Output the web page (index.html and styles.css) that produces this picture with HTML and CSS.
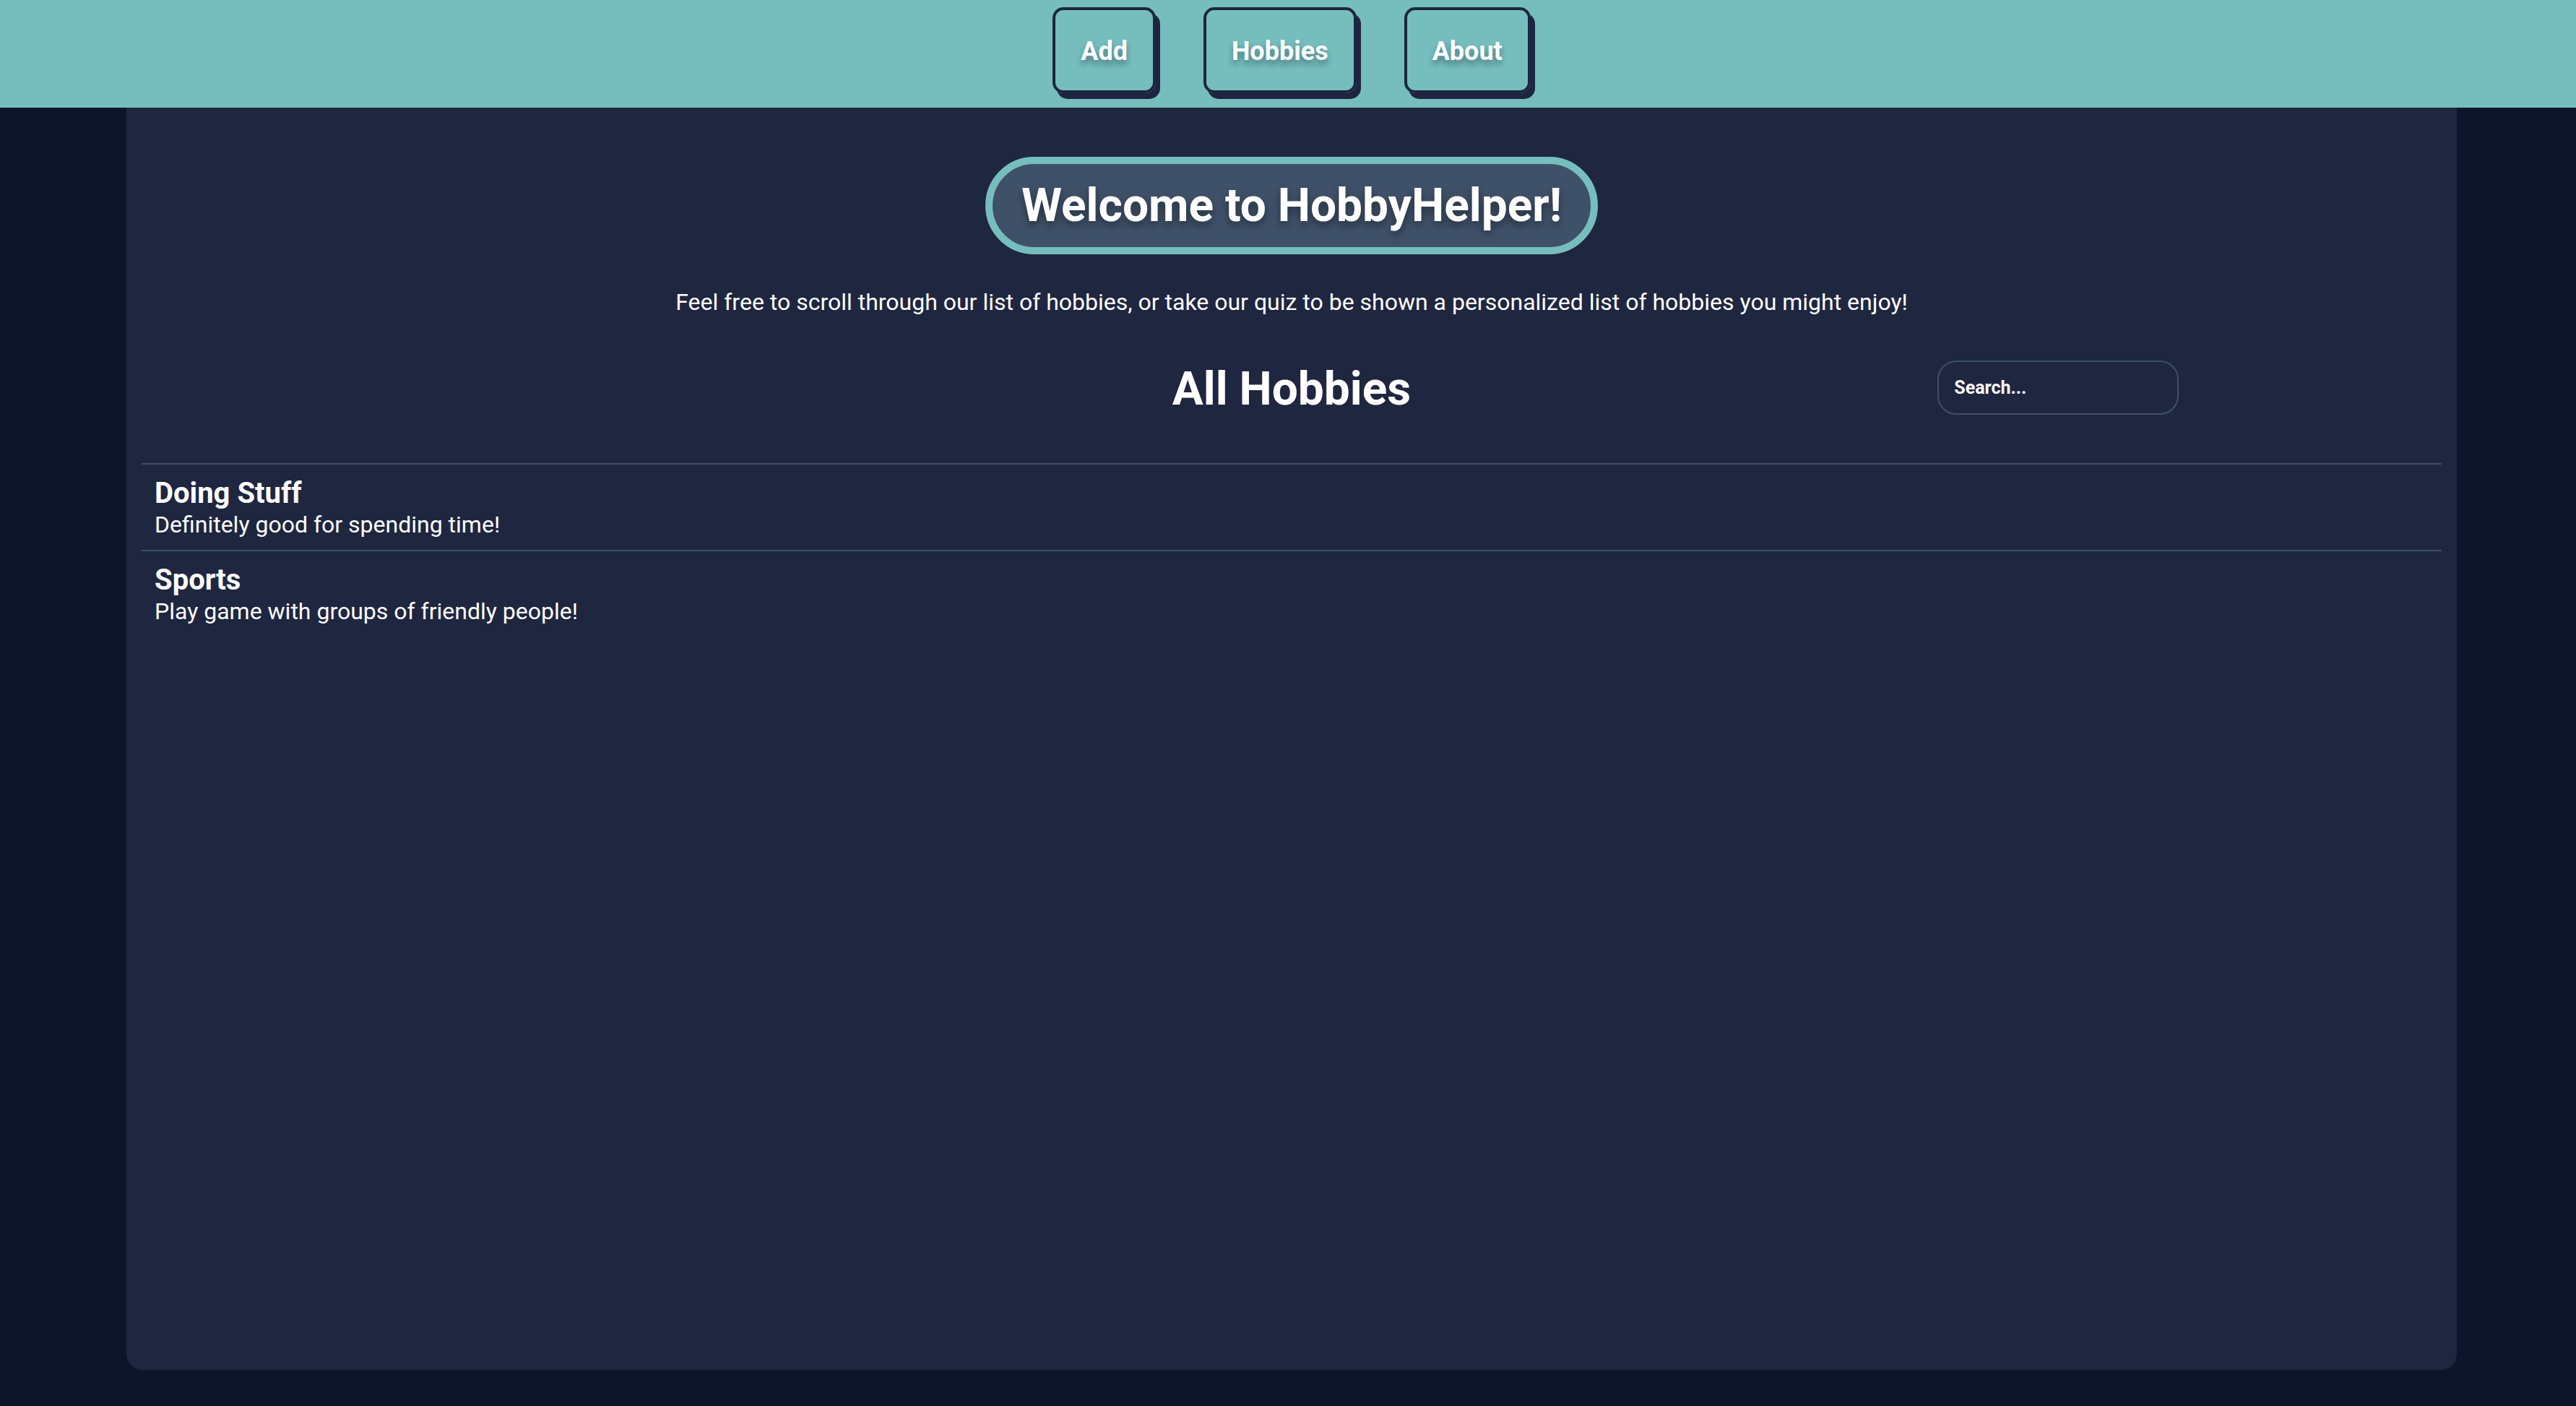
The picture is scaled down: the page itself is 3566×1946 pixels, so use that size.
FILE: index.html
```html
<!DOCTYPE html>
<html lang="en">
<head>
<meta charset="utf-8">
<title>HobbyHelper</title>
<link rel="stylesheet" href="styles.css">
</head>
<body>
<header class="topbar">
  <nav class="nav">
    <a class="nav-btn" href="#">Add</a>
    <a class="nav-btn" href="#">Hobbies</a>
    <a class="nav-btn" href="#">About</a>
  </nav>
</header>
<main class="card">
  <div class="hero">
    <h1 class="welcome">Welcome to HobbyHelper!</h1>
  </div>
  <p class="intro">Feel free to scroll through our list of hobbies, or take our quiz to be shown a personalized list of hobbies you might enjoy!</p>
  <div class="list-head">
    <div class="spacer"></div>
    <h2 class="list-title">All Hobbies</h2>
    <div class="search-wrap">
      <input class="search" type="text" placeholder="Search...">
    </div>
  </div>
  <ul class="hobbies">
    <li class="hobby">
      <div class="hobby-name">Doing Stuff</div>
      <div class="hobby-desc">Definitely good for spending time!</div>
    </li>
    <li class="hobby">
      <div class="hobby-name">Sports</div>
      <div class="hobby-desc">Play game with groups of friendly people!</div>
    </li>
  </ul>
</main>
</body>
</html>
```

FILE: styles.css
```css
* { box-sizing: border-box; }

html, body {
  margin: 0;
  padding: 0;
}

body {
  background: #0e1429;
  color: #ffffff;
  font-family: Roboto, "Liberation Sans", Arial, sans-serif;
}

.topbar {
  background: #76bebd;
  height: 149px;
  padding: 10px 0 0 10px;
}

.nav {
  display: flex;
  justify-content: center;
  gap: 66px;
}

.nav-btn {
  display: block;
  padding: 36px 35px 33px;
  border: 4px solid #1e2540;
  border-radius: 15px;
  box-shadow: 6px 8px 0 #1e2540;
  color: #ffffff;
  text-decoration: none;
  font-weight: 700;
  font-size: 36px;
  line-height: 42px;
  text-shadow: 0 6px 9px rgba(20, 40, 60, 0.45);
}

.card {
  background: #1f2640;
  margin: 0 165px 50px 175px;
  min-height: calc(100vh - 199px);
  border-radius: 0 0 22px 22px;
  padding: 68px 21px 20px;
}

.hero {
  display: flex;
  justify-content: center;
}

.welcome {
  margin: 0;
  background: #3f5169;
  border: 10px solid #76bebd;
  border-radius: 68px;
  padding: 0 40px;
  font-size: 64px;
  line-height: 115px;
  font-weight: 700;
  text-shadow: 0 6px 12px rgba(0, 0, 0, 0.4);
}

.intro {
  margin: 48px 0 0;
  text-align: center;
  font-size: 32px;
  line-height: 37px;
}

.list-head {
  display: grid;
  grid-template-columns: 1fr 1fr 1fr;
  grid-template-rows: 75px;
  align-items: center;
  margin-top: 62px;
}

.list-title {
  margin: 0;
  align-self: start;
  text-align: center;
  font-size: 64px;
  line-height: 80px;
  font-weight: 700;
}

.search-wrap {
  display: flex;
  justify-content: center;
}

.search {
  width: 334px;
  height: 75px;
  background: #1f2640;
  border: 2px solid #3d506b;
  border-radius: 26px;
  padding: 0 21px;
  color: #ffffff;
  font-family: Roboto, "Liberation Sans", Arial, sans-serif;
  font-size: 25px;
  font-weight: 700;
  outline: none;
}

.search::placeholder {
  color: #ffffff;
  opacity: 1;
}

.hobbies {
  list-style: none;
  margin: 67px 0 0;
  padding: 0;
}

.hobby {
  border-top: 2px solid #3d506b;
  padding: 17px 18px 15px;
}

.hobby-name {
  font-size: 40px;
  line-height: 46px;
  font-weight: 700;
}

.hobby-desc {
  font-size: 32px;
  line-height: 40px;
}
```
